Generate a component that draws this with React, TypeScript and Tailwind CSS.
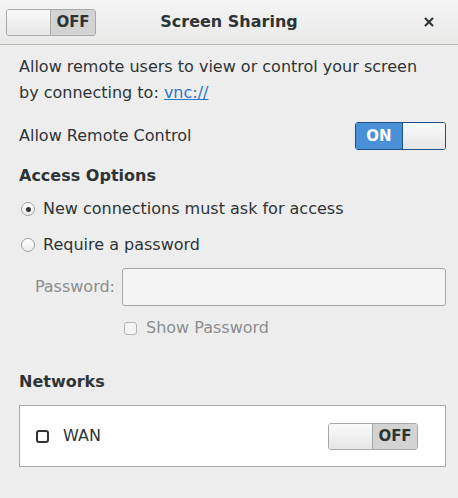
import { X } from "lucide-react";

type SwitchProps = { on: boolean };

const Switch = ({ on }: SwitchProps) => {
  if (on) {
    return (
      <div className="flex h-[28px] w-[91px] rounded-[3px] border border-[#1c5187] overflow-hidden">
        <div className="flex w-[46px] items-center justify-center bg-[#4a90d9] text-[15px] font-bold text-white">
          ON
        </div>
        <div className="flex-1 border-l border-[#1c5187] bg-gradient-to-b from-[#fafafa] to-[#e6e6e6]" />
      </div>
    );
  }
  return (
    <div className="flex h-[27px] w-[90px] rounded-[3px] border border-[#a8a8a8] overflow-hidden">
      <div className="w-[44px] border-r border-[#a8a8a8] bg-gradient-to-b from-[#fafafa] to-[#e6e6e6]" />
      <div className="flex flex-1 items-center justify-center bg-[#d3d3d3] text-[15px] font-bold text-[#2e3436]">
        OFF
      </div>
    </div>
  );
};

const Radio = ({ checked }: { checked: boolean }) => (
  <div className="flex h-[14px] w-[14px] items-center justify-center rounded-full border border-[#a1a1a1] bg-gradient-to-b from-white to-[#ececec]">
    {checked && <div className="h-[5px] w-[5px] rounded-full bg-[#2e3436]" />}
  </div>
);

export default function App() {
  return (
    <div
      className="h-[498px] w-[458px] bg-[#ededed] text-[#2e3436]"
      style={{ fontFamily: '"DejaVu Sans", "Open Sans", sans-serif' }}
    >
      {/* titlebar */}
      <header className="grid h-[45px] grid-cols-[1fr_auto_1fr] items-center border-b border-[#b6b6b3] bg-gradient-to-b from-[#f5f5f5] to-[#e9e9e8] px-[6px]">
        <div className="flex">
          <Switch on={false} />
        </div>
        <h1 className="text-[16px] font-bold">Screen Sharing</h1>
        <div className="flex justify-end pr-[16px]">
          <X size={14} strokeWidth={3.5} className="text-[#2e3436]" />
        </div>
      </header>

      <div className="px-[19px] text-[16px]">
        <p className="mt-[9px] leading-[26px]">
          Allow remote users to view or control your screen
          <br />
          by connecting to:{" "}
          <a href="#" className="text-[#2a76c6] underline">
            vnc://
          </a>
        </p>

        <div className="mt-[16px] flex items-center justify-between">
          <span>Allow Remote Control</span>
          <div className="-mr-[7px]">
            <Switch on={true} />
          </div>
        </div>

        <h2 className="mt-[13px] font-bold leading-[26px]">Access Options</h2>

        <div className="mt-[7px] flex flex-col gap-[10px]">
          <label className="flex h-[26px] items-center gap-[8px] pl-[2px]">
            <Radio checked={true} />
            <span>New connections must ask for access</span>
          </label>
          <label className="flex h-[26px] items-center gap-[8px] pl-[2px]">
            <Radio checked={false} />
            <span>Require a password</span>
          </label>
        </div>

        <div className="mt-[10px] -mr-[7px] flex items-center gap-[7px] text-[#8b8e8f]">
          <span className="w-[96px] text-right">Password:</span>
          <div className="h-[38px] flex-1 rounded-[3px] border border-[#a6a6a6] bg-[#f4f4f4]" />
        </div>

        <label className="mt-[10px] ml-[105px] flex items-center gap-[9px] text-[#8b8e8f]">
          <div className="h-[13px] w-[13px] rounded-[3px] border border-[#b3b3b3] bg-[#f4f4f4]" />
          <span>Show Password</span>
        </label>

        <h2 className="mt-[29px] font-bold leading-[26px]">Networks</h2>

        <div className="mt-[10px] -mr-[7px] flex h-[62px] items-center justify-between border border-[#a8a8a8] bg-white pl-[16px] pr-[27px]">
          <div className="flex items-center gap-[14px]">
            <div className="h-[13px] w-[13px] rounded-[3px] border-[2.5px] border-[#2e3436]" />
            <span>WAN</span>
          </div>
          <Switch on={false} />
        </div>
      </div>
    </div>
  );
}
